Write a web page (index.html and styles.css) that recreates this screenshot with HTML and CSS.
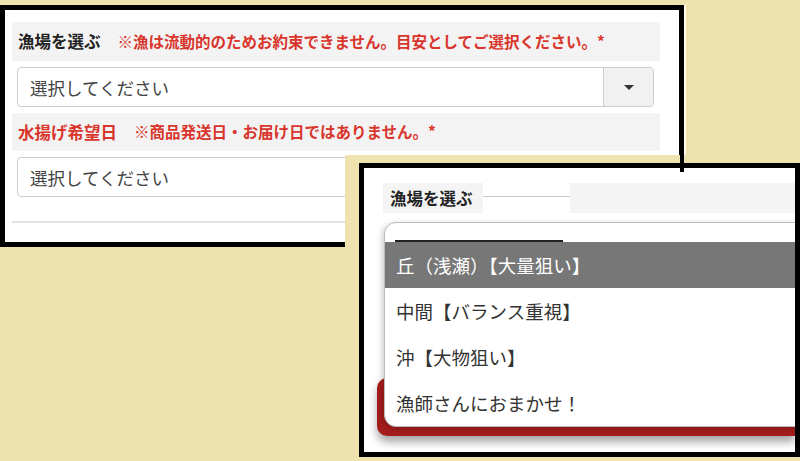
FILE: index.html
```html
<!DOCTYPE html>
<html lang="ja">
<head>
    <meta charset="utf-8">
    <meta name="viewport" content="width=device-width, initial-scale=1.0">
    <title>漁場を選ぶ</title>
    <link rel="stylesheet" href="styles.css">
</head>
<body>
    <div class="form-panel">
        <div class="field-head">
            <span class="field-label">漁場を選ぶ</span>
            <span class="field-note">※漁は流動的のためお約束できません。目安としてご選択ください。*</span>
        </div>
        <div class="select-box">
            <span class="select-text">選択してください</span>
            <span class="select-btn"><span class="caret"></span></span>
        </div>
        <div class="field-head">
            <span class="field-label red">水揚げ希望日</span>
            <span class="field-note">※商品発送日・お届け日ではありません。*</span>
        </div>
        <div class="select-box">
            <span class="select-text">選択してください</span>
            <span class="select-btn"><span class="caret"></span></span>
        </div>
        <hr class="form-rule">
    </div>

    <div class="zoom-panel">
        <div class="zoom-inner">
            <div class="zoom-head">
                <span class="field-label">漁場を選ぶ</span>
                <span class="cutout"></span>
            </div>
            <div class="submit-btn"></div>
            <ul class="option-list">
                <li class="option-search"></li>
                <li class="option active">丘（浅瀬）【大量狙い】</li>
                <li class="option">中間【バランス重視】</li>
                <li class="option">沖【大物狙い】</li>
                <li class="option">漁師さんにおまかせ！</li>
            </ul>
        </div>
    </div>
</body>
</html>
```

FILE: styles.css
```css
* {
    margin: 0;
    padding: 0;
    box-sizing: border-box;
}

:root {
    --beige: #eee2ae;
    --red-text: #d8352c;
    --head-bg: #f3f3f3;
}

body {
    height: 461px;
    background-color: var(--beige);
    font-family: "Noto Sans CJK JP", "Noto Sans", sans-serif;
    color: #222;
    overflow: hidden;
    position: relative;
}

/* left: the form as it is on the page */
.form-panel {
    width: 684px;
    height: 242px;
    margin-top: 5px;
    border: 5px solid #000;
    background-color: #fff;
    padding: 12px 19px 0 7px;
    box-shadow: 2px 0 0 #fffdf2;
}

.field-head {
    height: 39px;
    display: flex;
    align-items: center;
    padding-left: 6px;
    background-color: var(--head-bg);
    font-size: 16px;
    font-weight: bold;
    line-height: 1;
}

.field-head + .select-box {
    margin-top: 6px;
}

.select-box + .field-head {
    margin-top: 6px;
    height: 38px;
}

.field-label {
    font-size: 16.5px;
}

.field-label.red,
.field-note {
    color: var(--red-text);
}

.field-note {
    margin-left: 17px;
    font-size: 15.5px;
}

.select-box {
    height: 40px;
    margin: 0 6px 0 5px;
    display: flex;
    align-items: center;
    border: 1px solid #ccc;
    border-radius: 4px;
    overflow: hidden;
}

.select-text {
    padding-left: 12px;
    font-size: 17.5px;
    color: #444;
}

.select-btn {
    margin-left: auto;
    width: 50px;
    height: 100%;
    display: flex;
    align-items: center;
    justify-content: center;
    background-color: #f1f1f1;
    border-left: 1px solid #ccc;
}

.caret {
    border-left: 5px solid transparent;
    border-right: 5px solid transparent;
    border-top: 5px solid #333;
}

.form-rule {
    border: 0;
    border-top: 2px solid #e2e2e2;
    margin-top: 24px;
}

/* right: the opened dropdown, cut in over the form */
.zoom-panel {
    position: absolute;
    left: 345px;
    top: 155px;
    right: 0;
    bottom: 0;
    padding: 8px 0 4px 14px;
    background-color: var(--beige);
}

.zoom-panel::before {
    content: "";
    position: absolute;
    left: 335px;
    top: 0;
    width: 4px;
    height: 17px;
    background-color: #000;
    z-index: 2;
}

.zoom-inner {
    height: 100%;
    position: relative;
    overflow: hidden;
    border: 5px solid #000;
    background-color: #fff;
    padding: 15px 0 0 19px;
}

.zoom-head {
    height: 30px;
    display: flex;
    align-items: center;
    padding-left: 7px;
    background-color: #f4f4f4;
    font-weight: bold;
    line-height: 1;
}

.cutout {
    width: 87px;
    height: 100%;
    margin-left: 10px;
    background: linear-gradient(#fff 13px, #c8c8c8 13px, #c8c8c8 14px, #fff 14px);
}

.submit-btn {
    height: 58px;
    margin: 165px 0 0 -6px;
    background-color: #a51d1b;
    border-radius: 10px 0 0 10px;
    box-shadow: 0 6px 8px rgba(0, 0, 0, 0.35);
}

.option-list {
    position: absolute;
    left: 20px;
    top: 54px;
    right: -12px;
    list-style: none;
    background-color: #fff;
    border: 1px solid #bbb;
    border-radius: 12px 0 0 12px;
    box-shadow: -2px 2px 6px rgba(0, 0, 0, 0.2);
    overflow: hidden;
}

.option-search {
    height: 19px;
    position: relative;
}

.option-search::after {
    content: "";
    position: absolute;
    left: 10px;
    bottom: 0;
    width: 168px;
    height: 2px;
    background-color: #222;
}

.option {
    height: 46px;
    display: flex;
    align-items: center;
    padding-left: 11px;
    font-size: 18.5px;
    color: #333;
}

.option.active {
    background-color: #777;
    color: #fff;
}
```
